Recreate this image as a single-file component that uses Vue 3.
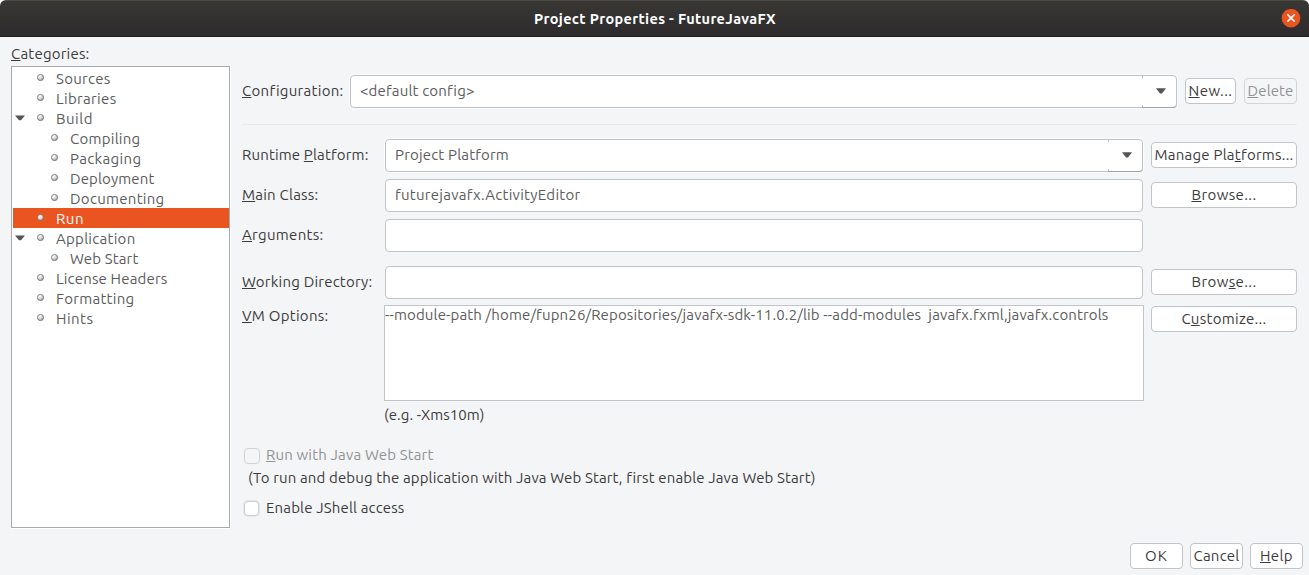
<script setup>
import { h } from 'vue'

// Caption with an underlined mnemonic letter: "&" precedes the letter.
const Caption = (props) => {
  const i = props.text.indexOf('&')
  if (i < 0) return h('span', { class: 'cap' }, props.text)
  return h('span', { class: 'cap' }, [
    props.text.slice(0, i),
    h('u', props.text[i + 1]),
    props.text.slice(i + 2),
  ])
}
Caption.props = ['text']

// Spreads letters so that a caption takes the given advance width.
const vFit = {
  mounted(el, { value }) {
    const width = el.getBoundingClientRect().width
    el.style.letterSpacing = (value - width) / el.textContent.length + 'px'
  },
}

const tree = [
  { t: 'Sources', w: 54.5 },
  { t: 'Libraries', w: 60.5 },
  { t: 'Build', w: 37, open: true },
  { t: 'Compiling', w: 70.5, sub: true },
  { t: 'Packaging', w: 71.5, sub: true },
  { t: 'Deployment', w: 84.5, sub: true },
  { t: 'Documenting', w: 94.5, sub: true },
  { t: 'Run', w: 28, sel: true },
  { t: 'Application', w: 79.5, open: true },
  { t: 'Web Start', w: 68.5, sub: true },
  { t: 'License Headers', w: 111.5 },
  { t: 'Formatting', w: 78.5 },
  { t: 'Hints', w: 37.5 },
]

const rows = [
  { label: 'Runtime &Platform:', lw: 126.5, value: 'Project Platform', vw: 114, combo: true, button: 'Manage Pla&tforms...', bw: 139 },
  { label: '&Main Class:', lw: 76.5, value: 'futurejavafx.ActivityEditor', vw: 185.5, button: '&Browse...', bw: 65 },
  { label: '&Arguments:', lw: 81.5 },
  { label: '&Working Directory:', lw: 130.5, button: 'Brow&se...', bw: 65, gap: true },
]

const vmOptions = '--module-path /home/fupn26/Repositories/javafx-sdk-11.0.2/lib --add-modules  javafx.fxml,javafx.controls'
</script>

<template>
  <div class="window">
    <header class="titlebar">
      <h1><Caption v-fit="242" text="Project Properties - FutureJavaFX" /></h1>
      <svg class="close" width="20" height="20" viewBox="0 0 20 20">
        <circle cx="10" cy="9.2" r="9.3" fill="#e95420" />
        <path d="M6.4 5.4l7.2 7.2M13.6 5.4l-7.2 7.2" stroke="#fff" stroke-width="1.5" />
      </svg>
    </header>

    <div class="content">
      <aside>
        <div class="heading"><Caption v-fit="78.5" text="&Categories:" /></div>
        <ul class="tree">
          <li v-for="n in tree" :key="n.t" :class="{ sub: n.sub, sel: n.sel }">
            <span class="twist">
              <svg v-if="n.open" width="10" height="6" viewBox="0 0 10 6"><path d="M0 .5h10L6 5.2H4z" fill="#555" /></svg>
            </span>
            <svg class="dot" width="8" height="8" viewBox="0 0 8 8">
              <defs>
                <radialGradient id="ball" cx=".35" cy=".3" r=".75">
                  <stop offset="0" stop-color="#fff" />
                  <stop offset=".45" stop-color="#dedede" />
                  <stop offset="1" stop-color="#999" />
                </radialGradient>
              </defs>
              <circle cx="3.5" cy="4.5" r="3.1" fill="url(#ball)" :stroke="n.sel ? '#a85f48' : '#6b7074'" stroke-width=".8" />
            </svg>
            <Caption v-fit="n.w" :text="n.t" />
          </li>
        </ul>
      </aside>

      <main>
        <div class="row config">
          <label><Caption v-fit="101" text="&Configuration:" /></label>
          <div class="field combo">
            <Caption v-fit="114" text="<default config>" />
            <span class="arrow"><svg width="10" height="6" viewBox="0 0 10 6"><path d="M0 .3h10L6 5.4H4z" fill="#555" /></svg></span>
          </div>
          <button class="new"><Caption v-fit="44" text="&New..." /></button>
          <button class="delete" disabled><Caption v-fit="46" text="&Delete" /></button>
        </div>
        <hr />

        <div v-for="r in rows" :key="r.label" class="row" :class="{ gap: r.gap }">
          <label><Caption v-fit="r.lw" :text="r.label" /></label>
          <div class="field" :class="{ combo: r.combo }">
            <Caption v-if="r.value" v-fit="r.vw" :text="r.value" />
            <span v-if="r.combo" class="arrow"><svg width="10" height="6" viewBox="0 0 10 6"><path d="M0 .3h10L6 5.4H4z" fill="#555" /></svg></span>
          </div>
          <button v-if="r.button" class="side"><Caption v-fit="r.bw" :text="r.button" /></button>
          <span v-else class="spacer"></span>
        </div>

        <div class="row vm">
          <label><Caption v-fit="86.5" text="&VM Options:" /></label>
          <div class="area"><Caption v-fit="723.5" :text="vmOptions" /></div>
          <button class="side"><Caption v-fit="85" text="C&ustomize..." /></button>
        </div>
        <div class="hint"><Caption v-fit="100.5" text="(e.g. -Xms10m)" /></div>

        <div class="check off"><i></i><Caption v-fit="167.5" text="&Run with Java Web Start" /></div>
        <div class="note"><Caption v-fit="567" text="(To run and debug the application with Java Web Start, first enable Java Web Start)" /></div>
        <div class="check on"><i></i><Caption v-fit="138.5" text="Enable JShell access" /></div>
      </main>
    </div>

    <footer>
      <button><Caption v-fit="23" text="OK" /></button>
      <button><Caption v-fit="46" text="Cancel" /></button>
      <button><Caption v-fit="33" text="&Help" /></button>
    </footer>
  </div>
</template>

<style>
body { background: #fff; }
.cap { white-space: pre; flex: none; }
.cap u { text-decoration: underline 1px; text-underline-offset: 1px; text-decoration-skip-ink: none; }
</style>

<style scoped>
.window {
  box-sizing: border-box;
  width: 1309px;
  height: 575px;
  display: flex;
  flex-direction: column;
  overflow: hidden;
  border-radius: 6px 6px 0 0;
  background: #f4f5f7;
  color: #3c3c3c;
  font: 15px/20px "Ubuntu", "Noto Sans", sans-serif;
}
.titlebar {
  box-sizing: border-box;
  flex: none;
  height: 37px;
  padding-right: 8px;
  display: flex;
  align-items: center;
  background: linear-gradient(#383733, #2d2b2c);
  border-top: 1px solid #4a4944;
  border-bottom: 1px solid #1f1e1d;
}
h1 { flex: 1; margin: 0 0 0 29px; text-align: center; font-size: 14.5px; line-height: 20px; font-weight: 700; color: #fff; }
.content { display: flex; height: 501px; flex: none; }
aside { width: 219px; margin: 6px 12px 0 11px; flex: none; }
.heading { height: 23px; line-height: 21px; }
.tree {
  box-sizing: border-box;
  height: 462px;
  margin: 0;
  padding: 1px 0 0 1px;
  list-style: none;
  background: #fff;
  border: 1px solid #a8aaac;
  box-shadow: 0 1px #fff, 1px 0 #fff;
  color: #5c5c5c;
}
.tree li { display: flex; height: 20px; padding-left: 2px; line-height: 21px; }
.twist { width: 22px; display: flex; align-items: center; }
.dot { margin: 5px 11px 0 0; }
.sub .twist { width: 36px; }
.tree .sel { background: #e95420; color: #fff; }

main { width: 1055px; }
.row { display: flex; align-items: center; height: 33px; margin-bottom: 7px; }
.row label { width: 143px; padding-bottom: 2px; flex: none; }
.config { margin: 38px 0 16px; }
.config label { width: 108px; }
hr { margin: 0 0 14px; border: 0; height: 1px; background: #e9eaec; }
.gap { margin-top: 14px; margin-bottom: 6px; }
.field {
  box-sizing: border-box;
  flex: 1;
  height: 33px;
  display: flex;
  align-items: center;
  padding: 0 0 2px 9px;
  background: #fff;
  border: 1px solid #c0c5cb;
  border-radius: 4px;
  color: #5c5c5c;
}
.combo { padding-bottom: 0; border-color: #c1c2c4; box-shadow: 0 0 0 1px #fafbfc; }
.combo .cap { padding-bottom: 2px; }
.arrow {
  box-sizing: border-box;
  width: 35px;
  height: 33px;
  margin: 0 -1px 0 auto;
  display: flex;
  align-items: center;
  justify-content: center;
  padding: 0 0 0 3px;
  border-bottom: 1px solid #a2a3a5;
  border-radius: 0 0 4px 0;
  background:
    linear-gradient(#c1c2c4, #c1c2c4) 0 1px / 1px 2px no-repeat,
    linear-gradient(#c1c2c4, #c1c2c4) 0 30px / 1px 2px no-repeat;
}
button {
  box-sizing: border-box;
  height: 26px;
  width: 53px;
  margin: 0;
  padding: 0 0 1px;
  display: flex;
  align-items: center;
  justify-content: center;
  flex: none;
  font: inherit;
  color: #3c3c3c;
  background: #fff;
  border: 1px solid #c0c5cb;
  border-radius: 4px;
}
.row button { margin: 0 0 1px 8px; }
.row .new { width: 51px; }
button:disabled { color: #929394; background: #f4f5f7; border-color: #d3d6d9; }
.row .side { width: 146px; }
.spacer { width: 154px; }
.vm { height: 96px; align-items: flex-start; margin: 0 0 3px; }
.vm label { width: 142px; padding-top: 1px; }
.row.vm .side { margin: 1px 0 0 7px; }
.area {
  box-sizing: border-box;
  width: 760px;
  height: 96px;
  padding-left: 0;
  line-height: 18px;
  background: #fff;
  border: 1px solid #c0c5cb;
  color: #5c5c5c;
}
.hint { padding: 1px 0 0 142px; height: 40px; }
.check { display: flex; align-items: flex-start; height: 23px; margin-left: 2px; }
.check i {
  box-sizing: border-box;
  width: 16px;
  height: 16px;
  margin: 3px 6px 0 0;
  background: #fff;
  border: 1px solid #cfcfcf;
  border-radius: 4px;
}
.on i { width: 15px; height: 15px; margin-right: 7px; box-shadow: 0 0 0 1px #e6e6e7; }
.off { color: #929394; }
.off i { background: transparent; border-color: #d0d1d2; }
.note { height: 30px; padding-left: 6px; }
footer { display: flex; gap: 7px; justify-content: flex-end; padding: 5px 6px 0 0; }
</style>
